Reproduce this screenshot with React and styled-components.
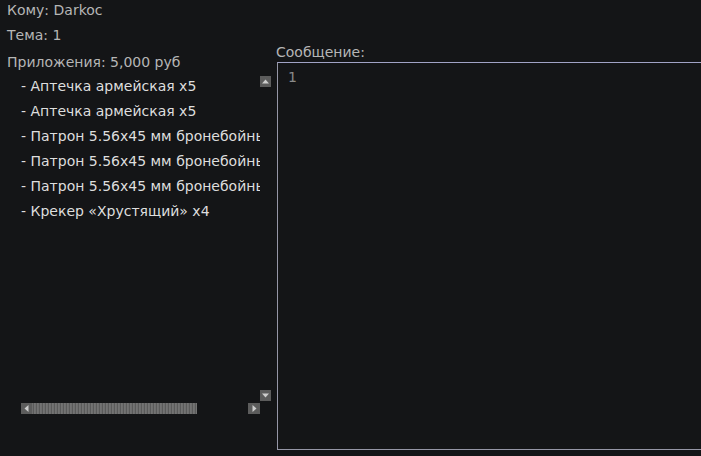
import React from 'react';
import styled, { createGlobalStyle } from 'styled-components';

const items = [
  'Аптечка армейская x5',
  'Аптечка армейская x5',
  'Патрон 5.56x45 мм бронебойный x60',
  'Патрон 5.56x45 мм бронебойный x60',
  'Патрон 5.56x45 мм бронебойный x60',
  'Крекер «Хрустящий» x4',
];

function Arrow({ dir }) {
  const pts = {
    up: '1,6.5 4.5,2.5 8,6.5',
    down: '1,2.5 4.5,6.5 8,2.5',
    left: '6.5,1 2.5,4.5 6.5,8',
    right: '2.5,1 6.5,4.5 2.5,8',
  };
  return (
    <svg width="9" height="9" viewBox="0 0 9 9">
      <polygon points={pts[dir]} fill="#cdcdcd" />
    </svg>
  );
}

function App() {
  return (
    <>
      <GlobalStyle />
      <Page>
        <Field>Кому: Darkoc</Field>
        <Field $gap>Тема: 1</Field>
        <Main>
          <LeftPane>
            <Attach>Приложения: 5,000 руб</Attach>
            <ListBox>
              <ListContent>
                {items.map((item, i) => (
                  <Item key={i}>- {item}</Item>
                ))}
              </ListContent>
              <VScroll>
                <ScrollBtn>
                  <Arrow dir="up" />
                </ScrollBtn>
                <ScrollBtn>
                  <Arrow dir="down" />
                </ScrollBtn>
              </VScroll>
              <HScroll>
                <ScrollBtn>
                  <Arrow dir="left" />
                </ScrollBtn>
                <Thumb />
                <Spacer />
                <ScrollBtn $wide>
                  <Arrow dir="right" />
                </ScrollBtn>
              </HScroll>
            </ListBox>
          </LeftPane>
          <RightPane>
            <MsgLabel>Сообщение:</MsgLabel>
            <Editor>
              <LineNo>1</LineNo>
            </Editor>
          </RightPane>
        </Main>
      </Page>
    </>
  );
}

const GlobalStyle = createGlobalStyle`
  html, body {
    margin: 0;
    background: #141517;
    overflow: hidden;
  }
  body {
    font-family: "DejaVu Sans", sans-serif;
    font-size: 14px;
  }
`;

const Page = styled.div`
  width: 701px;
  height: 456px;
  padding-left: 7px;
  box-sizing: border-box;
  overflow: hidden;
`;

const Field = styled.div`
  color: #b6b6b6;
  line-height: 20px;
  margin-top: ${(p) => (p.$gap ? '5px' : '0')};
`;

const Main = styled.div`
  display: flex;
`;

const LeftPane = styled.div`
  width: 269px;
  flex-shrink: 0;
`;

const Attach = styled.div`
  color: #b6b6b6;
  line-height: 20px;
  margin-top: 7px;
`;

const ListBox = styled.div`
  margin: 2px 0 0 14px;
  width: 250px;
  display: grid;
  grid-template-columns: 239px 11px;
  grid-template-rows: 329px 11px;
`;

// list is clipped on the right like in the game window
const ListContent = styled.div`
  overflow: hidden;
  white-space: nowrap;
`;

const Item = styled.div`
  color: #dedede;
  line-height: 25px;
`;

const VScroll = styled.div`
  display: flex;
  flex-direction: column;
  justify-content: space-between;
  padding: 2px 0;
`;

const HScroll = styled.div`
  display: flex;
`;

const ScrollBtn = styled.div`
  width: ${(p) => (p.$wide ? '12px' : '11px')};
  height: 11px;
  background: #5c5c5c;
  display: flex;
  align-items: center;
  justify-content: center;
`;

const Thumb = styled.div`
  width: 165px;
  height: 11px;
  background: repeating-linear-gradient(
    90deg,
    #6e6e6e 0 1px,
    #5a5a5a 1px 2px,
    #737373 2px 3px
  );
`;

const Spacer = styled.div`
  flex: 1;
`;

const RightPane = styled.div`
  flex: 1;
`;

const MsgLabel = styled.div`
  color: #b6b6b6;
  line-height: 14px;
  margin-bottom: 3px;
`;

const Editor = styled.div`
  margin-left: 1px;
  width: 440px;
  height: 388px;
  box-sizing: border-box;
  border: 1px solid #9596a6;
  border-top-color: #a1a3c6;
  padding: 6px 10px;
`;

const LineNo = styled.div`
  color: #8a8a8a;
  line-height: 16px;
`;

export default App;
